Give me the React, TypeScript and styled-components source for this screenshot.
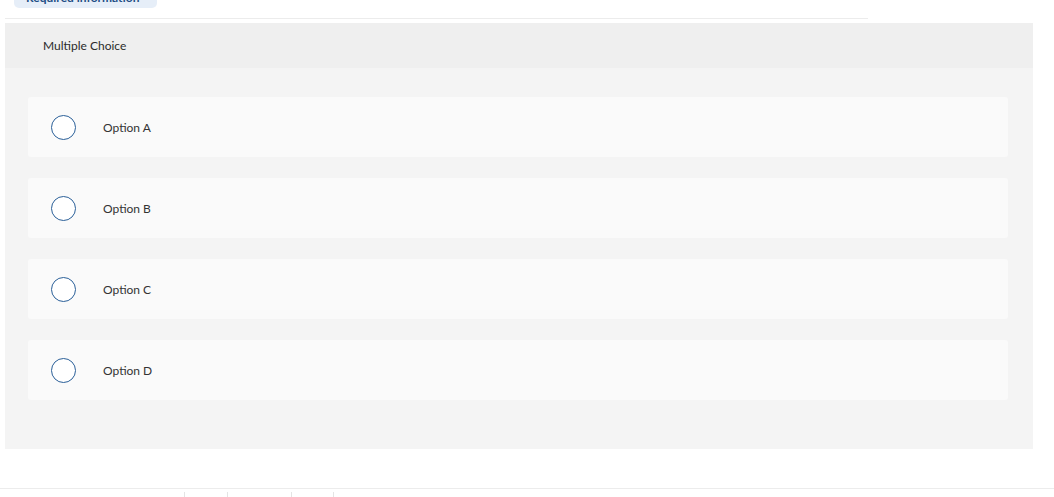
import styled, { createGlobalStyle } from "styled-components";

const GlobalStyle = createGlobalStyle`
  html, body {
    margin: 0;
    padding: 0;
    background: #ffffff;
    font-family: Lato, "Liberation Sans", sans-serif;
    overflow: hidden;
  }
`;

const Page = styled.div`
  width: 1054px;
  height: 497px;
  display: flex;
  flex-direction: column;
  overflow: hidden;
`;

const Content = styled.div`
  padding: 0 21px 0 5px;
  display: flex;
  flex-direction: column;
`;

const BadgeRow = styled.div`
  display: flex;
  padding-left: 9px;
  margin-top: -14px;
`;

const Badge = styled.div`
  width: 143px;
  height: 22px;
  box-sizing: border-box;
  padding: 5px 12px 0;
  border-radius: 5px;
  background: #e6eef8;
  color: #1f4f86;
  font-size: 12px;
  font-weight: 700;
  line-height: 14px;
  white-space: nowrap;
  overflow: hidden;
`;

const Divider = styled.div`
  width: 863px;
  height: 1px;
  background: #ececec;
  margin-top: 10px;
`;

const Panel = styled.section`
  margin-top: 4px;
  background: #f4f4f4;
  display: flex;
  flex-direction: column;
`;

const PanelHeader = styled.div`
  height: 45px;
  background: #efefef;
  display: flex;
  align-items: center;
  padding-left: 38px;
  font-size: 12px;
  color: #2b2b2b;
`;

const OptionList = styled.div`
  display: flex;
  flex-direction: column;
  gap: 21px;
  padding: 29px 25px 49px 23px;
`;

const OptionCard = styled.label`
  height: 60px;
  background: #fafafa;
  border-radius: 3px;
  display: flex;
  align-items: center;
  padding-left: 23px;
  gap: 27px;
  font-size: 12px;
  color: #333333;
  cursor: pointer;
`;

const Radio = styled.span`
  width: 25px;
  height: 25px;
  box-sizing: border-box;
  border-radius: 50%;
  border: 1.5px solid #2a5f98;
  background: #ffffff;
  flex-shrink: 0;
`;

const Footer = styled.div`
  margin-top: auto;
  height: 8px;
  border-top: 1px solid #ececec;
  display: flex;
  padding-left: 184px;
`;

const Tick = styled.span<{ $gap: number }>`
  width: 1px;
  height: 5px;
  margin-top: 3px;
  margin-right: ${(p) => p.$gap}px;
  background: #e4e4e4;
`;

const options = ["Option A", "Option B", "Option C", "Option D"];

const App = () => {
  return (
    <Page>
      <GlobalStyle />
      <Content>
        <BadgeRow>
          <Badge>Required information</Badge>
        </BadgeRow>
        <Divider />
        <Panel>
          <PanelHeader>Multiple Choice</PanelHeader>
          <OptionList>
            {options.map((o) => (
              <OptionCard key={o}>
                <Radio />
                {o}
              </OptionCard>
            ))}
          </OptionList>
        </Panel>
      </Content>
      <Footer>
        <Tick $gap={42} />
        <Tick $gap={63} />
        <Tick $gap={41} />
        <Tick $gap={0} />
      </Footer>
    </Page>
  );
};

export default App;
